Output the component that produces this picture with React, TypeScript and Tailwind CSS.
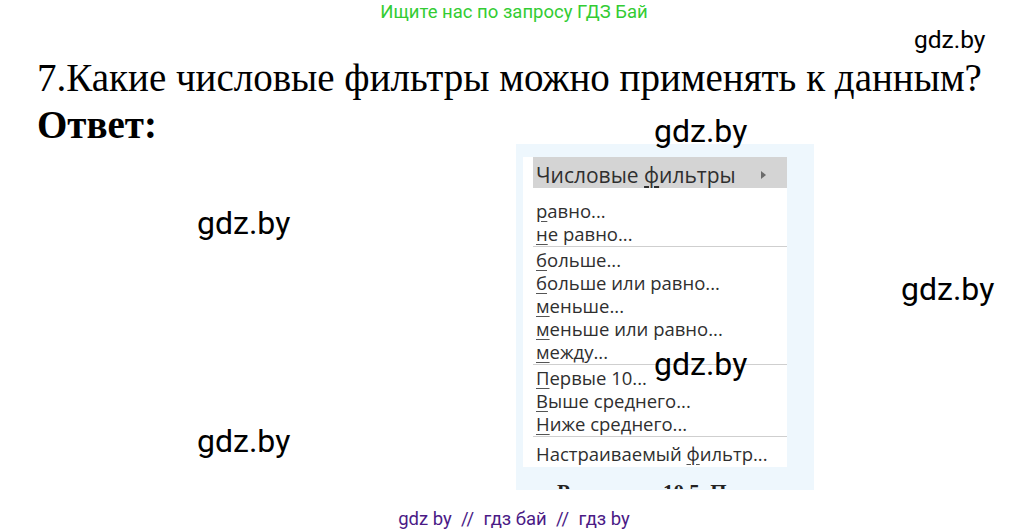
import React from "react";

const menuFont = { fontFamily: '"Open Sans", "Noto Sans", sans-serif' };

function Item({ text, u = 0 }: { text: string; u?: number }) {
  // underline the access-key letter like a desktop menu
  return (
    <div className="h-[23px] leading-[23px] text-[18.5px] text-[#2f2f2f] pl-[13px] whitespace-nowrap">
      {text.slice(0, u)}
      <span className="underline decoration-[#555] underline-offset-[3px]">{text[u]}</span>
      {text.slice(u + 1)}
    </div>
  );
}

function Sep() {
  return (
    <div className="h-[3px] pt-[1px] ml-[10px]">
      <div className="h-[1px] bg-[#cfcfcf]" />
    </div>
  );
}

function Mark({ className }: { className: string }) {
  return (
    <div
      className={`absolute text-black leading-none ${className}`}
      style={{ fontFamily: "Roboto, sans-serif" }}
    >
      gdz.by
    </div>
  );
}

export default function App() {
  return (
    <div className="relative w-[1028px] h-[531px] bg-white overflow-hidden">
      <div
        className="h-[24px] text-center text-[18.5px] leading-none pt-[3px] text-[#33cc33]"
        style={{ fontFamily: "Roboto, sans-serif" }}
      >
        Ищите нас по запросу ГДЗ Бай
      </div>

      <div className="h-[120px] pl-[37px] pt-[30px]" style={{ fontFamily: '"Liberation Serif", serif' }}>
        <div className="text-[39px] leading-[48px] text-black whitespace-nowrap">
          7.Какие числовые фильтры можно применять к данным?
        </div>
        <div className="text-[39px] leading-[46px] font-bold text-black">Ответ:</div>
      </div>

      <div className="flex pl-[516px]">
        <div className="w-[298px] h-[346px] bg-[#eef7fd] pt-[13px] pl-[7px] overflow-hidden">
          <div className="w-[264px] bg-white pb-[2px]" style={menuFont}>
            <div className="h-[31px] ml-[10px] bg-[#d4d4d4] flex items-center justify-between pt-[5px] pl-[3px] pr-[21px] text-[21px] leading-none text-[#2f2f2f]">
              <span>
                Числовые <span className="underline underline-offset-[3px]">ф</span>ильтры
              </span>
              <svg width="5" height="8" viewBox="0 0 5 8">
                <path d="M0 0 L5 4 L0 8 Z" fill="#6b6b6b" />
              </svg>
            </div>
            <div className="h-[11px]" />
            <Item text="равно..." />
            <Item text="не равно..." />
            <Sep />
            <Item text="больше..." />
            <Item text="больше или равно..." />
            <Item text="меньше..." />
            <Item text="меньше или равно..." />
            <Item text="между..." />
            <Sep />
            <Item text="Первые 10..." />
            <Item text="Выше среднего..." />
            <Item text="Ниже среднего..." />
            <Sep />
            <div className="h-[4px]" />
            <Item text="Настраиваемый фильтр..." u={14} />
          </div>
          <div className="h-[22px] overflow-hidden">
            <div
              className="pl-[34px] pt-[15px] text-[21px] font-bold leading-none text-[#222] whitespace-nowrap"
              style={{ fontFamily: '"Liberation Serif", serif' }}
            >
              <span className="inline-block w-[106px]">Рисунок</span>10.5. Пользовательский
            </div>
          </div>
        </div>
      </div>

      <div
        className="absolute left-0 right-0 top-[506px] text-center text-[18.5px] text-[#4b1a86] whitespace-pre"
        style={{ fontFamily: "Roboto, sans-serif" }}
      >
        {"gdz by  //  гдз бай  //  гдз by"}
      </div>

      <Mark className="left-[914px] top-[28px] text-[24.5px]" />
      <Mark className="left-[654px] top-[115px] text-[32px]" />
      <Mark className="left-[197px] top-[207px] text-[32px]" />
      <Mark className="left-[901px] top-[273px] text-[32px]" />
      <Mark className="left-[654px] top-[348px] text-[32px]" />
      <Mark className="left-[197px] top-[425px] text-[32px]" />
    </div>
  );
}
